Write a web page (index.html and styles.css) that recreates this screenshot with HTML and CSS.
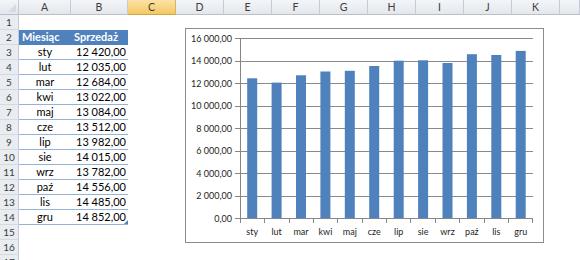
FILE: index.html
```html
<!DOCTYPE html>
<html lang="pl">
<head>
<meta charset="utf-8">
<link rel="stylesheet" href="styles.css">
</head>
<body>
<div class="sheet">
  <div class="row head">
    <div class="rh corner"><span class="tri"></span></div>
    <div class="ch a">A</div><div class="ch b">B</div><div class="ch c sel">C</div>
    <div class="ch d">D</div><div class="ch d">E</div><div class="ch d">F</div><div class="ch d">G</div>
    <div class="ch d">H</div><div class="ch d">I</div><div class="ch d">J</div><div class="ch d">K</div><div class="ch rest"></div>
  </div>
  <div class="row"><div class="rh">1</div></div>
  <div class="row"><div class="rh">2</div><div class="cell a th">Miesiąc</div><div class="cell b th">Sprzedaż</div></div>
  <div class="row"><div class="rh">3</div><div class="cell a td">sty</div><div class="cell b td num">12 420,00</div></div>
  <div class="row"><div class="rh">4</div><div class="cell a td">lut</div><div class="cell b td num">12 035,00</div></div>
  <div class="row"><div class="rh">5</div><div class="cell a td">mar</div><div class="cell b td num">12 684,00</div></div>
  <div class="row"><div class="rh">6</div><div class="cell a td">kwi</div><div class="cell b td num">13 022,00</div></div>
  <div class="row"><div class="rh">7</div><div class="cell a td">maj</div><div class="cell b td num">13 084,00</div></div>
  <div class="row"><div class="rh">8</div><div class="cell a td">cze</div><div class="cell b td num">13 512,00</div></div>
  <div class="row"><div class="rh">9</div><div class="cell a td">lip</div><div class="cell b td num">13 982,00</div></div>
  <div class="row"><div class="rh">10</div><div class="cell a td">sie</div><div class="cell b td num">14 015,00</div></div>
  <div class="row"><div class="rh">11</div><div class="cell a td">wrz</div><div class="cell b td num">13 782,00</div></div>
  <div class="row"><div class="rh">12</div><div class="cell a td">paź</div><div class="cell b td num">14 556,00</div></div>
  <div class="row"><div class="rh">13</div><div class="cell a td">lis</div><div class="cell b td num">14 485,00</div></div>
  <div class="row"><div class="rh">14</div><div class="cell a td">gru</div><div class="cell b td num last">14 852,00<span class="handle"></span></div></div>
  <div class="row"><div class="rh">15</div></div>
  <div class="row"><div class="rh">16</div></div>
  <div class="row"><div class="rh">17</div></div>

  <div class="chart">
    <svg width="359" height="215" viewBox="0 0 359 215">
      <g class="grid">
        <line x1="55" y1="10.5" x2="348" y2="10.5"/>
        <line x1="55" y1="33.5" x2="348" y2="33.5"/>
        <line x1="55" y1="55.5" x2="348" y2="55.5"/>
        <line x1="55" y1="78.5" x2="348" y2="78.5"/>
        <line x1="55" y1="100.5" x2="348" y2="100.5"/>
        <line x1="55" y1="123.5" x2="348" y2="123.5"/>
        <line x1="55" y1="145.5" x2="348" y2="145.5"/>
        <line x1="55" y1="168.5" x2="348" y2="168.5"/>
      </g>
      <g class="bars">
        <rect x="62.2" y="50.3" width="10" height="139.7"/>
        <rect x="86.6" y="54.6" width="10" height="135.4"/>
        <rect x="111.0" y="47.3" width="10" height="142.7"/>
        <rect x="135.4" y="43.5" width="10" height="146.5"/>
        <rect x="159.8" y="42.8" width="10" height="147.2"/>
        <rect x="184.2" y="38.0" width="10" height="152.0"/>
        <rect x="208.7" y="32.7" width="10" height="157.3"/>
        <rect x="233.1" y="32.3" width="10" height="157.7"/>
        <rect x="257.5" y="35.0" width="10" height="155.0"/>
        <rect x="281.9" y="26.2" width="10" height="163.8"/>
        <rect x="306.3" y="27.0" width="10" height="163.0"/>
        <rect x="330.7" y="22.9" width="10" height="167.1"/>
      </g>
      <g class="axis">
        <line x1="55.5" y1="10" x2="55.5" y2="190"/>
        <line x1="55" y1="190.5" x2="348" y2="190.5"/>
        <line x1="50" y1="10.5" x2="55" y2="10.5"/>
        <line x1="50" y1="33.5" x2="55" y2="33.5"/>
        <line x1="50" y1="55.5" x2="55" y2="55.5"/>
        <line x1="50" y1="78.5" x2="55" y2="78.5"/>
        <line x1="50" y1="100.5" x2="55" y2="100.5"/>
        <line x1="50" y1="123.5" x2="55" y2="123.5"/>
        <line x1="50" y1="145.5" x2="55" y2="145.5"/>
        <line x1="50" y1="168.5" x2="55" y2="168.5"/>
        <line x1="50" y1="190.5" x2="55" y2="190.5"/>
        <line x1="55.5" y1="190" x2="55.5" y2="195"/>
        <line x1="79.5" y1="190" x2="79.5" y2="195"/>
        <line x1="104.5" y1="190" x2="104.5" y2="195"/>
        <line x1="128.5" y1="190" x2="128.5" y2="195"/>
        <line x1="152.5" y1="190" x2="152.5" y2="195"/>
        <line x1="177.5" y1="190" x2="177.5" y2="195"/>
        <line x1="201.5" y1="190" x2="201.5" y2="195"/>
        <line x1="225.5" y1="190" x2="225.5" y2="195"/>
        <line x1="250.5" y1="190" x2="250.5" y2="195"/>
        <line x1="274.5" y1="190" x2="274.5" y2="195"/>
        <line x1="299.5" y1="190" x2="299.5" y2="195"/>
        <line x1="323.5" y1="190" x2="323.5" y2="195"/>
        <line x1="347.5" y1="190" x2="347.5" y2="195"/>
      </g>
      <g class="ylab">
        <text x="47" y="13.5">16 000,00</text>
        <text x="47" y="36">14 000,00</text>
        <text x="47" y="58.5">12 000,00</text>
        <text x="47" y="81">10 000,00</text>
        <text x="47" y="103.5">8 000,00</text>
        <text x="47" y="126">6 000,00</text>
        <text x="47" y="148.5">4 000,00</text>
        <text x="47" y="171">2 000,00</text>
        <text x="47" y="193.5">0,00</text>
      </g>
      <g class="xlab">
        <text x="67.2" y="207">sty</text>
        <text x="91.6" y="207">lut</text>
        <text x="116.0" y="207">mar</text>
        <text x="140.4" y="207">kwi</text>
        <text x="164.8" y="207">maj</text>
        <text x="189.2" y="207">cze</text>
        <text x="213.7" y="207">lip</text>
        <text x="238.1" y="207">sie</text>
        <text x="262.5" y="207">wrz</text>
        <text x="286.9" y="207">paź</text>
        <text x="311.3" y="207">lis</text>
        <text x="335.7" y="207">gru</text>
      </g>
    </svg>
  </div>
</div>
</body>
</html>
```

FILE: styles.css
```css
html, body {
  margin: 0;
  padding: 0;
  background: #ffffff;
  overflow: hidden;
}
body {
  font-family: Lato, "Open Sans", sans-serif;
  font-size: 11px;
  color: #000;
}
.sheet {
  position: relative;
  width: 580px;
  height: 260px;
  overflow: hidden;
}
.row {
  display: flex;
  height: 15px;
}
.rh {
  box-sizing: border-box;
  width: 19px;
  flex: none;
  height: 15px;
  background: #e9ecf0;
  border-right: 1px solid #c4cad3;
  border-bottom: 1px solid #d5dae1;
  color: #3c3c3c;
  font-size: 10px;
  line-height: 14px;
  text-align: center;
}
.head {
  height: 15px;
}
.ch {
  box-sizing: border-box;
  flex: none;
  height: 15px;
  background: linear-gradient(#f3f5f8, #e3e7ec);
  border-right: 1px solid #c6ccd5;
  border-bottom: 1px solid #b9c0ca;
  color: #3c3c3c;
  font-size: 10.5px;
  line-height: 14px;
  text-align: center;
}
.corner {
  position: relative;
  background: linear-gradient(#f3f5f8, #e3e7ec);
  border-bottom: 1px solid #b9c0ca;
}
.tri {
  position: absolute;
  right: 2px;
  bottom: 2px;
  width: 0;
  height: 0;
  border-left: 8px solid transparent;
  border-bottom: 8px solid #d7dbe1;
}
.ch.sel {
  background: linear-gradient(#fbe3a6, #f4c862);
  border-right-color: #d9b560;
  border-bottom-color: #d1a445;
}
.a { width: 52px; }
.b { width: 57px; }
.c { width: 48px; }
.d { width: 48px; }
.rest { flex: 1; }
.cell {
  box-sizing: border-box;
  flex: none;
  height: 15px;
  line-height: 14px;
  white-space: nowrap;
  overflow: visible;
}
.th {
  background: #4f81bd;
  color: #ffffff;
  font-weight: bold;
  padding-left: 3px;
}
.td {
  border-bottom: 1px solid #95b3d7;
  text-align: center;
}
.num {
  text-align: right;
  padding-right: 2px;
  position: relative;
}
.handle {
  position: absolute;
  right: 0;
  bottom: 0;
  width: 0;
  height: 0;
  border-left: 4px solid transparent;
  border-bottom: 4px solid #4f81bd;
}
.chart {
  position: absolute;
  left: 185px;
  top: 28px;
  width: 359px;
  height: 215px;
  box-sizing: border-box;
  border: 1px solid #8d8d8d;
  background: #ffffff;
}
.chart svg {
  display: block;
  position: absolute;
  left: -1px;
  top: -1px;
}
.grid line {
  stroke: #8a8a8a;
  stroke-width: 1;
}
.axis line {
  stroke: #868686;
  stroke-width: 1;
}
.bars rect {
  fill: #4f81bd;
}
.ylab text {
  font-family: Lato, "Open Sans", sans-serif;
  font-size: 9px;
  fill: #1e1e1e;
  text-anchor: end;
}
.xlab text {
  font-family: Lato, "Open Sans", sans-serif;
  font-size: 9px;
  fill: #1e1e1e;
  text-anchor: middle;
}
```
